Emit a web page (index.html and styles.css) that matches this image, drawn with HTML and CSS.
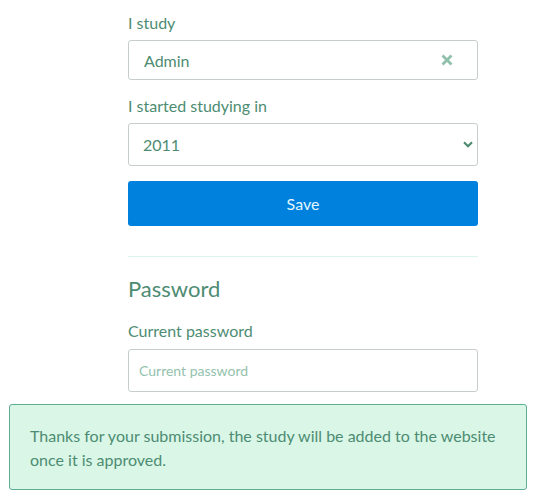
FILE: index.html
```html
<!DOCTYPE html>
<html lang="en">
<head>
<meta charset="utf-8">
<title>Profile</title>
<link rel="stylesheet" href="styles.css">
</head>
<body>
<main class="page">
  <form class="form">
    <label class="label" for="study">I study</label>
    <div class="field">
      <input class="input input-study" id="study" type="text" value="Admin">
      <span class="clear" aria-label="Clear">
        <svg width="12" height="12" viewBox="0 0 12 12"><path d="M1.5 1.5 L10.5 10.5 M10.5 1.5 L1.5 10.5" stroke="#8fc0ab" stroke-width="2.8" stroke-linecap="butt" fill="none"/></svg>
      </span>
    </div>

    <label class="label label-gap" for="year">I started studying in</label>
    <div class="field">
      <select class="input select" id="year">
        <option>2011</option>
      </select>
      <span class="chevron">
        <svg width="10" height="7" viewBox="0 0 10 7"><path d="M1 1.2 L5 5.2 L9 1.2" stroke="#4d8c72" stroke-width="2.2" fill="none"/></svg>
      </span>
    </div>

    <button class="btn" type="button">Save</button>

    <hr class="divider">

    <h2 class="heading">Password</h2>
    <label class="label label-pw" for="cur">Current password</label>
    <input class="input input-pw" id="cur" type="password" placeholder="Current password">
  </form>
</main>

<div class="toast">
  Thanks for your submission, the study will be added to the website once it is approved.
</div>
</body>
</html>
```

FILE: styles.css
```css
* { box-sizing: border-box; }

html, body {
  margin: 0;
  padding: 0;
  background: #ffffff;
}

body {
  font-family: Lato, "Open Sans", sans-serif;
  color: #4d8c72;
  overflow: hidden;
  height: 494px;
}

.page {
  padding: 12px 74px 0 128px;
}

.form {
  display: flex;
  flex-direction: column;
  width: 350px;
}

.label {
  display: block;
  font-size: 16px;
  line-height: 22px;
  color: #4d8c72;
  margin-bottom: 6px;
}

.label-gap { margin-top: 15px; }

.label-pw {
  margin-top: 18px;
  margin-bottom: 7px;
}

.field {
  position: relative;
}

.input {
  display: block;
  width: 100%;
  margin: 0;
  border: 1px solid #c7ceca;
  border-radius: 3px;
  background: #fff;
  font-family: Lato, "Open Sans", sans-serif;
  color: #4d8c72;
  outline: none;
}

.input-study {
  height: 40px;
  padding: 0 15px;
  font-size: 16px;
}

.select {
  height: 43px;
  padding: 0 14px;
  font-size: 16px;
  appearance: none;
  -webkit-appearance: none;
}

.input-pw {
  height: 43px;
  padding: 0 10px;
  font-size: 14px;
}

.input-pw::placeholder {
  color: #93c2ae;
  opacity: 1;
}

.clear {
  position: absolute;
  right: 25px;
  top: 14px;
  width: 12px;
  height: 12px;
  display: flex;
}

.chevron {
  position: absolute;
  right: 5px;
  top: 18px;
  display: flex;
}

.btn {
  margin-top: 15px;
  height: 45px;
  width: 100%;
  border: none;
  border-radius: 3px;
  background: #0081dd;
  color: #e3f6ff;
  font-family: Lato, "Open Sans", sans-serif;
  font-size: 16px;
}

.divider {
  margin: 30px 0 0 0;
  border: none;
  border-top: 1px solid #dcf5ec;
  height: 0;
}

.heading {
  margin: 18px 0 0 0;
  font-size: 22px;
  line-height: 27px;
  font-weight: 400;
  color: #4d8c72;
}

.toast {
  position: fixed;
  left: 9px;
  top: 404px;
  width: 518px;
  height: 86px;
  padding: 19px 20px 0 20px;
  background: #d9f6e7;
  border: 1px solid #5dae92;
  border-radius: 3px;
  font-size: 16px;
  line-height: 24px;
  color: #4d8c72;
}
```
